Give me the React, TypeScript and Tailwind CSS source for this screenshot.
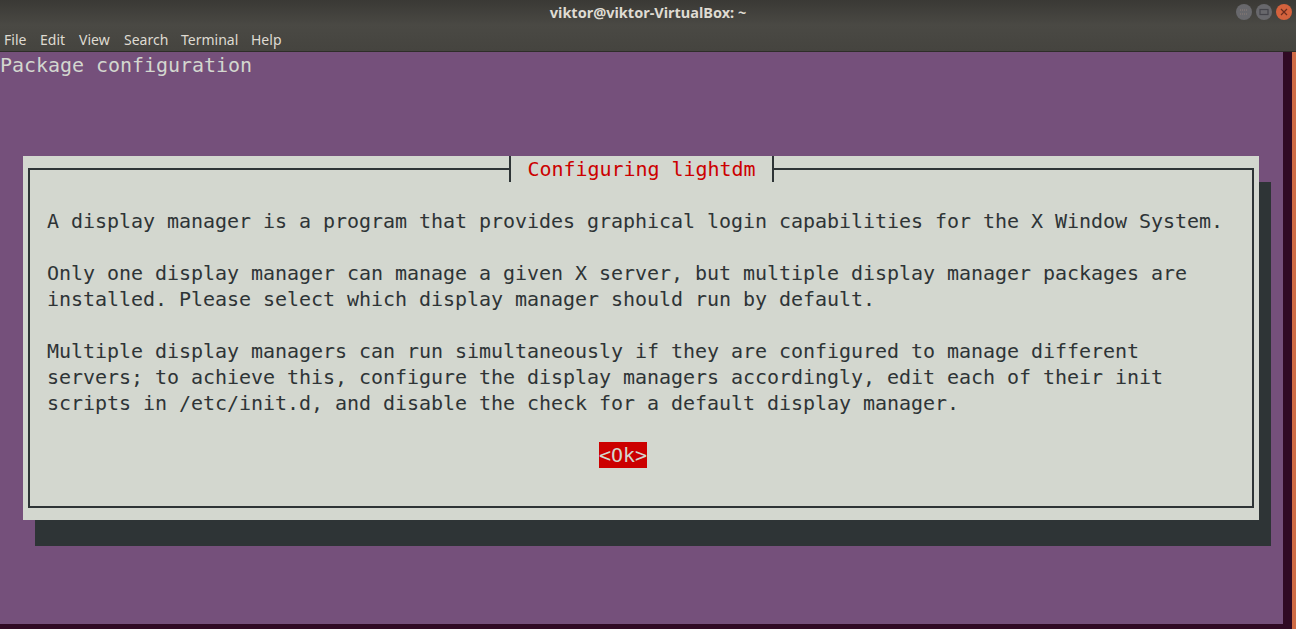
import React from 'react'

const menus = ['File', 'Edit', 'View', 'Search', 'Terminal', 'Help']

const WindowButton = ({ kind }: { kind: 'min' | 'max' | 'close' }) => {
  const close = kind === 'close'
  return (
    <div className={`flex h-4 w-4 items-center justify-center rounded-full ${close ? 'bg-[#d4623d]' : 'bg-[#68686c]'}`}>
      <svg width="10" height="10" viewBox="0 0 10 10" fill="none">
        {kind === 'min' && <path d="M1 3h8M1 7h8" stroke="#8d7f78" strokeWidth="1" strokeDasharray="1 1" />}
        {kind === 'max' && <rect x="1" y="2.5" width="8" height="5" stroke="#44444a" strokeWidth="1.2" />}
        {close && <path d="M2 2l6 6M8 2l-6 6" stroke="#6b2c1e" strokeWidth="1.2" />}
      </svg>
    </div>
  )
}

const App: React.FC = () => {
  return (
    <div className="flex h-[629px] w-[1296px] flex-col overflow-hidden bg-[#300a24]">
      <div className="flex h-[52px] shrink-0 flex-col border-b border-[#2e2d29] bg-gradient-to-b from-[#3a3935] via-[#4a4944] to-[#45443f] font-['Noto_Sans',sans-serif] text-[#dfdbd2]">
        <div className="relative flex h-[26px] items-center justify-center text-[14.5px] font-bold">
          <span>viktor@viktor-VirtualBox: ~</span>
          <div className="absolute right-[4px] top-[4px] flex gap-1">
            <WindowButton kind="min" />
            <WindowButton kind="max" />
            <WindowButton kind="close" />
          </div>
        </div>
        <div className="grid grid-cols-[36px_39px_45px_57px_70px_auto] pl-[4px] pt-[3px] text-sm leading-[22px]">
          {menus.map((m) => (
            <span key={m}>{m}</span>
          ))}
        </div>
      </div>

      <div className="flex flex-1">
        <div className="flex min-w-0 flex-1 flex-col pb-[5px] pr-[9px]">
          <div className="flex flex-1 flex-col bg-[#75507b] font-['DejaVu_Sans_Mono',monospace] text-[20px] leading-[26px] tracking-[-0.04px]">
            <div className="h-[26px] text-[#d3d7cf]">Package configuration</div>
            <div className="ml-[23px] mt-[78px] flex h-[364px] w-[1236px] flex-col bg-[#d3d7cf] px-[5px] py-[12px] text-[#2e3436] shadow-[12px_26px_0_#2e3436]">
              <div className="flex h-full flex-col border-2 border-[#2e3436]">
                <div className="ml-[479px] mt-[-14px] flex h-[26px] w-[265px] shrink-0 items-center justify-center border-x-2 border-[#2e3436] bg-[#d3d7cf] text-[#cc0000]">
                  Configuring lightdm
                </div>
                <div className="ml-[17px] mt-[26px] whitespace-pre">
                  <p>A display manager is a program that provides graphical login capabilities for the X Window System.</p>
                  <p className="mt-[26px]">Only one display manager can manage a given X server, but multiple display manager packages are</p>
                  <p>installed. Please select which display manager should run by default.</p>
                  <p className="mt-[26px]">Multiple display managers can run simultaneously if they are configured to manage different</p>
                  <p>servers; to achieve this, configure the display managers accordingly, edit each of their init</p>
                  <p>scripts in /etc/init.d, and disable the check for a default display manager.</p>
                </div>
                <div className="ml-[569px] mt-[26px] w-fit bg-[#cc0000] text-[#d3d7cf]">&lt;Ok&gt;</div>
              </div>
            </div>
          </div>
        </div>
        <div className="w-[4px] shrink-0 bg-[#cf6b45]" />
      </div>
    </div>
  )
}

export default App
